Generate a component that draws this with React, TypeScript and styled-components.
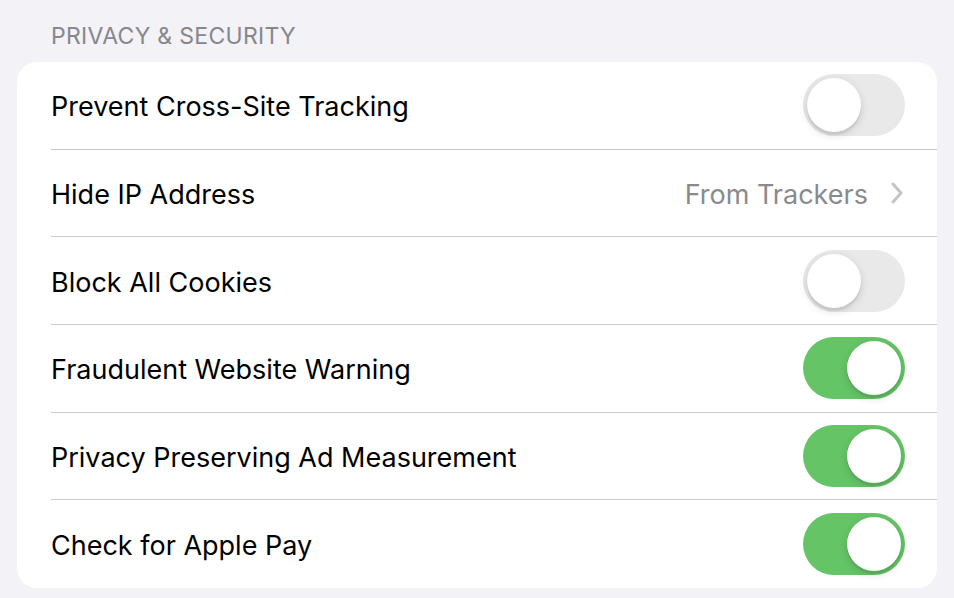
import React from "react";
import styled, { createGlobalStyle } from "styled-components";

const Global = createGlobalStyle`
  html, body { margin: 0; padding: 0; background: #f2f2f7; }
  body { font-family: Inter, "Noto Sans", sans-serif; -webkit-font-smoothing: antialiased; }
`;

const Page = styled.div`
  width: 954px;
  height: 598px;
  box-sizing: border-box;
  padding: 22px 17px 0 17px;
  background: #f2f2f7;
  display: flex;
  flex-direction: column;
  overflow: hidden;
`;

const SectionHeader = styled.div`
  padding-left: 34px;
  height: 40px;
  font-size: 23px;
  color: #87878c;
  letter-spacing: 0.3px;
  line-height: 28px;
`;

const Card = styled.div`
  background: #ffffff;
  border-radius: 20px;
  overflow: hidden;
  display: flex;
  flex-direction: column;
`;

const Row = styled.div`
  height: 87.67px;
  display: flex;
  align-items: center;
  margin-left: 34px;
  padding-right: 32px;
  box-sizing: border-box;
  border-bottom: 1px solid #c8c8cc;
  &:last-child { border-bottom: none; }
`;

const Label = styled.div`
  flex: 1;
  font-size: 27px;
  color: #000;
  letter-spacing: 0;
  padding-top: 3px;
`;

const Value = styled.div`
  font-size: 27px;
  color: #8a8a8e;
  letter-spacing: 0;
  margin-right: 22px;
  padding-top: 3px;
`;

const Track = styled.div<{ $on: boolean }>`
  width: 102px;
  height: 62px;
  border-radius: 31px;
  background: ${(p) => (p.$on ? "#65c466" : "#e9e9ea")};
  position: relative;
  flex-shrink: 0;
`;

const Knob = styled.div<{ $on: boolean }>`
  position: absolute;
  top: 4px;
  left: ${(p) => (p.$on ? "44px" : "4px")};
  width: 54px;
  height: 54px;
  border-radius: 50%;
  background: #fff;
  box-shadow: 0 3px 8px rgba(0, 0, 0, 0.15), 0 3px 1px rgba(0, 0, 0, 0.06);
`;

const Toggle = ({ on }: { on: boolean }) => (
  <Track $on={on}>
    <Knob $on={on} />
  </Track>
);

const Chevron = () => (
  <svg width="14" height="22" viewBox="0 0 14 22" style={{ marginRight: 1 }}>
    <path d="M3 2 L11 11 L3 20" fill="none" stroke="#c4c4c7" strokeWidth="3" strokeLinecap="round" strokeLinejoin="round" />
  </svg>
);

const rows: { label: string; toggle?: boolean; value?: string }[] = [
  { label: "Prevent Cross-Site Tracking", toggle: false },
  { label: "Hide IP Address", value: "From Trackers" },
  { label: "Block All Cookies", toggle: false },
  { label: "Fraudulent Website Warning", toggle: true },
  { label: "Privacy Preserving Ad Measurement", toggle: true },
  { label: "Check for Apple Pay", toggle: true },
];

export default function App() {
  return (
    <>
      <Global />
      <Page>
        <SectionHeader>PRIVACY &amp; SECURITY</SectionHeader>
        <Card>
          {rows.map((r) => (
            <Row key={r.label}>
              <Label>{r.label}</Label>
              {r.value !== undefined ? (
                <>
                  <Value>{r.value}</Value>
                  <Chevron />
                </>
              ) : (
                <Toggle on={!!r.toggle} />
              )}
            </Row>
          ))}
        </Card>
      </Page>
    </>
  );
}
